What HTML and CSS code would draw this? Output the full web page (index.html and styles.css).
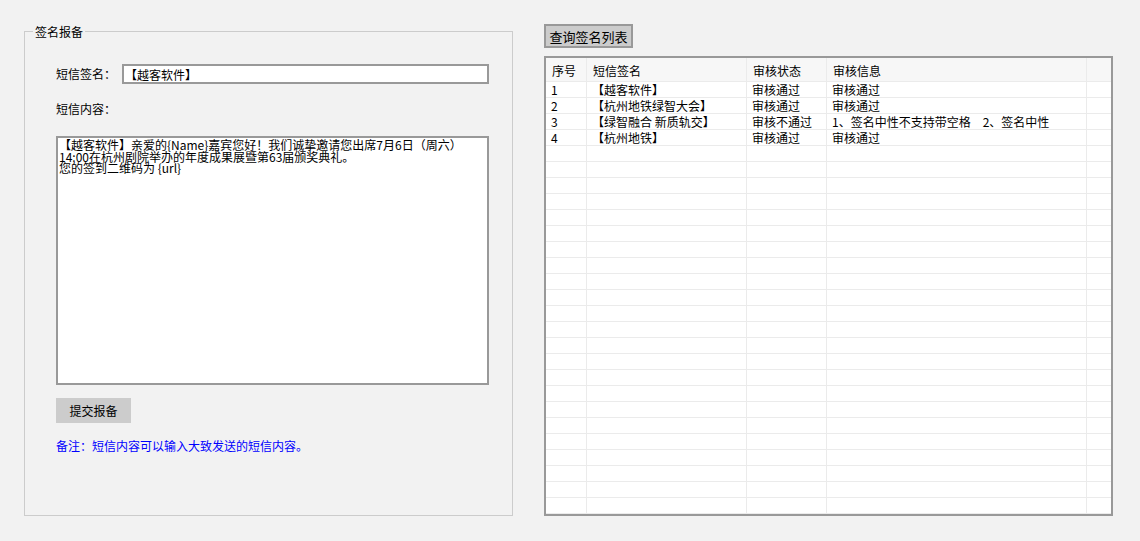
FILE: index.html
```html
<!DOCTYPE html>
<html lang="zh-CN">
<head>
<meta charset="utf-8">
<title>签名报备</title>
<link rel="stylesheet" href="styles.css">
</head>
<body>
<div class="page">
  <fieldset class="group">
    <legend class="group-title">签名报备</legend>
    <div class="group-body">
      <div class="sign-row">
        <label class="lbl sign-lbl">短信签名：</label>
        <input class="sign-input" type="text" value="【越客软件】">
      </div>
      <div class="lbl content-lbl">短信内容：</div>
      <textarea class="content-box">【越客软件】亲爱的{Name}嘉宾您好！我们诚挚邀请您出席7月6日（周六）
14:00在杭州剧院举办的年度成果展暨第63届颁奖典礼。
您的签到二维码为 {url}</textarea>
      <button class="btn-submit" type="button">提交报备</button>
      <div class="note">备注：短信内容可以输入大致发送的短信内容。</div>
    </div>
  </fieldset>

  <div class="right">
    <button class="btn-query" type="button">查询签名列表</button>
    <div class="grid">
      <div class="g-row g-head">
        <div class="g-cell">序号</div>
        <div class="g-cell">短信签名</div>
        <div class="g-cell">审核状态</div>
        <div class="g-cell">审核信息</div>
        <div class="g-cell"></div>
      </div>
      <div class="g-row">
        <div class="g-cell num">1</div>
        <div class="g-cell">【越客软件】</div>
        <div class="g-cell">审核通过</div>
        <div class="g-cell">审核通过</div>
        <div class="g-cell"></div>
      </div>
      <div class="g-row">
        <div class="g-cell num">2</div>
        <div class="g-cell">【杭州地铁绿智大会】</div>
        <div class="g-cell">审核通过</div>
        <div class="g-cell">审核通过</div>
        <div class="g-cell"></div>
      </div>
      <div class="g-row">
        <div class="g-cell num">3</div>
        <div class="g-cell">【绿智融合 新质轨交】</div>
        <div class="g-cell">审核不通过</div>
        <div class="g-cell">1、签名中性不支持带空格　2、签名中性</div>
        <div class="g-cell"></div>
      </div>
      <div class="g-row">
        <div class="g-cell num">4</div>
        <div class="g-cell">【杭州地铁】</div>
        <div class="g-cell">审核通过</div>
        <div class="g-cell">审核通过</div>
        <div class="g-cell"></div>
      </div>
      <div class="g-row"><div class="g-cell"></div><div class="g-cell"></div><div class="g-cell"></div><div class="g-cell"></div><div class="g-cell"></div></div>
      <div class="g-row"><div class="g-cell"></div><div class="g-cell"></div><div class="g-cell"></div><div class="g-cell"></div><div class="g-cell"></div></div>
      <div class="g-row"><div class="g-cell"></div><div class="g-cell"></div><div class="g-cell"></div><div class="g-cell"></div><div class="g-cell"></div></div>
      <div class="g-row"><div class="g-cell"></div><div class="g-cell"></div><div class="g-cell"></div><div class="g-cell"></div><div class="g-cell"></div></div>
      <div class="g-row"><div class="g-cell"></div><div class="g-cell"></div><div class="g-cell"></div><div class="g-cell"></div><div class="g-cell"></div></div>
      <div class="g-row"><div class="g-cell"></div><div class="g-cell"></div><div class="g-cell"></div><div class="g-cell"></div><div class="g-cell"></div></div>
      <div class="g-row"><div class="g-cell"></div><div class="g-cell"></div><div class="g-cell"></div><div class="g-cell"></div><div class="g-cell"></div></div>
      <div class="g-row"><div class="g-cell"></div><div class="g-cell"></div><div class="g-cell"></div><div class="g-cell"></div><div class="g-cell"></div></div>
      <div class="g-row"><div class="g-cell"></div><div class="g-cell"></div><div class="g-cell"></div><div class="g-cell"></div><div class="g-cell"></div></div>
      <div class="g-row"><div class="g-cell"></div><div class="g-cell"></div><div class="g-cell"></div><div class="g-cell"></div><div class="g-cell"></div></div>
      <div class="g-row"><div class="g-cell"></div><div class="g-cell"></div><div class="g-cell"></div><div class="g-cell"></div><div class="g-cell"></div></div>
      <div class="g-row"><div class="g-cell"></div><div class="g-cell"></div><div class="g-cell"></div><div class="g-cell"></div><div class="g-cell"></div></div>
      <div class="g-row"><div class="g-cell"></div><div class="g-cell"></div><div class="g-cell"></div><div class="g-cell"></div><div class="g-cell"></div></div>
      <div class="g-row"><div class="g-cell"></div><div class="g-cell"></div><div class="g-cell"></div><div class="g-cell"></div><div class="g-cell"></div></div>
      <div class="g-row"><div class="g-cell"></div><div class="g-cell"></div><div class="g-cell"></div><div class="g-cell"></div><div class="g-cell"></div></div>
      <div class="g-row"><div class="g-cell"></div><div class="g-cell"></div><div class="g-cell"></div><div class="g-cell"></div><div class="g-cell"></div></div>
      <div class="g-row"><div class="g-cell"></div><div class="g-cell"></div><div class="g-cell"></div><div class="g-cell"></div><div class="g-cell"></div></div>
      <div class="g-row"><div class="g-cell"></div><div class="g-cell"></div><div class="g-cell"></div><div class="g-cell"></div><div class="g-cell"></div></div>
      <div class="g-row"><div class="g-cell"></div><div class="g-cell"></div><div class="g-cell"></div><div class="g-cell"></div><div class="g-cell"></div></div>
      <div class="g-row"><div class="g-cell"></div><div class="g-cell"></div><div class="g-cell"></div><div class="g-cell"></div><div class="g-cell"></div></div>
      <div class="g-row"><div class="g-cell"></div><div class="g-cell"></div><div class="g-cell"></div><div class="g-cell"></div><div class="g-cell"></div></div>
      <div class="g-row"><div class="g-cell"></div><div class="g-cell"></div><div class="g-cell"></div><div class="g-cell"></div><div class="g-cell"></div></div>
      <div class="g-row"><div class="g-cell"></div><div class="g-cell"></div><div class="g-cell"></div><div class="g-cell"></div><div class="g-cell"></div></div>
    </div>
  </div>
</div>
</body>
</html>
```

FILE: styles.css
```css
* { box-sizing: border-box; }

html, body {
  margin: 0;
  padding: 0;
  background: #f2f2f2;
}

body {
  font-family: "Noto Sans CJK SC", "Noto Sans", sans-serif;
  font-size: 12px;
  color: #000;
  width: 1140px;
  height: 541px;
  overflow: hidden;
}

.page {
  display: flex;
  align-items: flex-start;
  padding: 24px 0 0 24px;
  gap: 31px;
}

/* ---------- left group box ---------- */
.group {
  margin: 1px 0 0 0;
  padding: 0;
  width: 489px;
  height: 491px;
  min-width: 0;
  border: 1px solid #cccccc;
}

.group-title {
  margin-left: 8px;
  padding: 0 2px;
  font-size: 12px;
  line-height: 13px;
}

.group-body {
  padding: 26px 0 0 31px;
}

.lbl {
  font-size: 12px;
  line-height: 12px;
}

.sign-row {
  display: flex;
  align-items: center;
  height: 20px;
}

.sign-lbl {
  width: 66px;
  flex: none;
}

.sign-input {
  width: 367px;
  height: 20px;
  border: 2px solid #999999;
  background: #fff;
  padding: 0 1px;
  margin: 0;
  font-family: inherit;
  font-size: 12px;
  color: #000;
  outline: none;
}

.content-lbl {
  margin-top: 19px;
}

.content-box {
  display: block;
  margin-top: 21px;
  width: 433px;
  height: 249px;
  border: 2px solid #999999;
  background: #fff;
  padding: 1px 1px;
  font-family: inherit;
  font-size: 12px;
  line-height: 11.5px;
  color: #000;
  resize: none;
  outline: none;
}

.btn-submit {
  display: block;
  margin-top: 13px;
  width: 75px;
  height: 25px;
  border: none;
  background: #cccccc;
  font-family: inherit;
  font-size: 12px;
  color: #000;
  padding: 0;
}

.note {
  margin-top: 16px;
  line-height: 13px;
  color: #0000ff;
}

/* ---------- right side ---------- */
.right {
  display: flex;
  flex-direction: column;
  align-items: flex-start;
}

.btn-query {
  width: 89px;
  height: 24px;
  border: 2px solid #999999;
  background: #cccccc;
  font-family: inherit;
  font-size: 13px;
  color: #000;
  padding: 0;
}

.grid {
  margin-top: 8px;
  width: 569px;
  height: 460px;
  border: 2px solid #999999;
  background: #fff;
  overflow: hidden;
}

.g-row {
  display: grid;
  grid-template-columns: 41px 160px 80px 260px 24px;
  height: 16px;
}

.g-cell {
  border-right: 1px solid #ebebeb;
  border-bottom: 1px solid #ebebeb;
  padding-left: 5px;
  line-height: 15px;
  white-space: nowrap;
  overflow: hidden;
}

.g-cell:last-child {
  border-right: none;
}

.g-head {
  height: 24px;
  background: #f7f7f7;
}

.g-head .g-cell {
  padding-left: 6px;
  padding-top: 3px;
  line-height: 20px;
}
```
